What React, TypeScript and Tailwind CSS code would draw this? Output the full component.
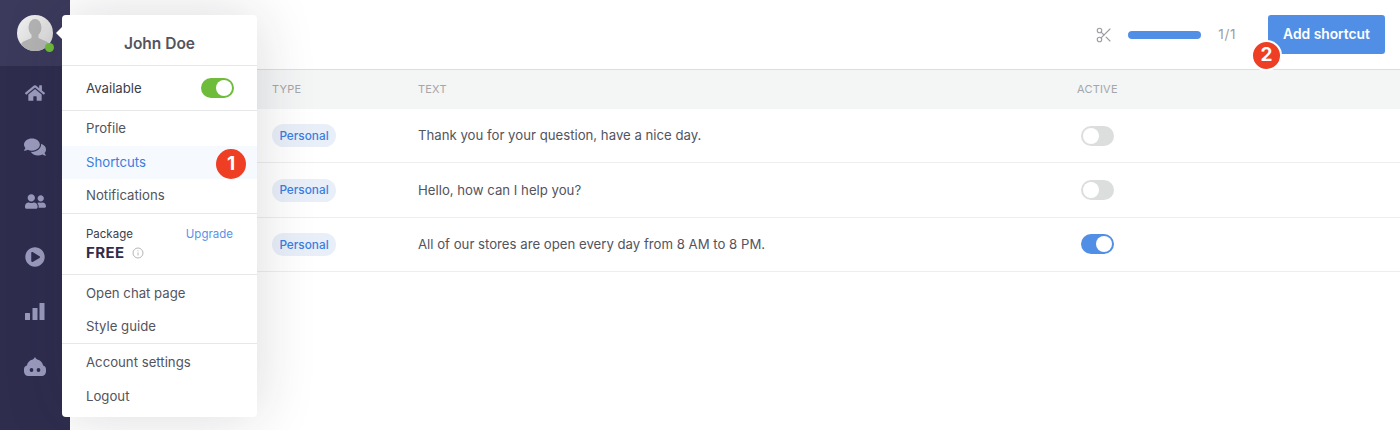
import { Scissors } from "lucide-react";
import type { FC } from "react";
import { FaComments, FaHome, FaPlayCircle, FaUserFriends } from "react-icons/fa";

const rows = [
    { text: "Thank you for your question, have a nice day.", active: false },
    { text: "Hello, how can I help you?", active: false },
    { text: "All of our stores are open every day from 8 AM to 8 PM.", active: true },
];

const ChartIcon: FC = () => (
    <svg width="20" height="17" viewBox="0 0 20 17" fill="#9a9bbd">
        <rect x="0" y="10" width="5" height="7" rx="0.5" />
        <rect x="7.5" y="5" width="5" height="12" rx="0.5" />
        <rect x="14.5" y="0" width="5" height="17" rx="0.5" />
    </svg>
);

const BotIcon: FC = () => (
    <svg width="22" height="20" viewBox="0 0 22 20">
        <path
            d="M11 0c.6 1.200 1.300 1.700 2.200 2.400 3.300.7 5.500 3.300 5.900 6.100 1.600.4 2.900 1.800 2.900 3.700v2.300c0 2.500-1.900 4.500-4.300 4.500H4.300C1.900 19 0 17 0 14.500v-2.300c0-1.900 1.300-3.300 2.900-3.700.4-2.800 2.600-5.400 5.900-6.100C9.700 1.700 10.400 1.200 11 0z"
            fill="#9a9bbd"
        />
        <circle cx="7.500" cy="13" r="1.900" fill="#2f2d4e" />
        <circle cx="14.500" cy="13" r="1.900" fill="#2f2d4e" />
    </svg>
);

const Avatar: FC = () => (
    <div className="relative h-9 w-9">
        <div className="h-9 w-9 overflow-hidden rounded-full bg-gradient-to-br from-[#f1f1f1] to-[#d4d4d4]">
            <svg viewBox="0 0 36 36" className="h-9 w-9" fill="#b3b3b3">
                <ellipse cx="18" cy="12.500" rx="6.500" ry="8.500" />
                <path d="M14.500 19h7v4l8 3.500c1.500.7 2.500 2 2.500 4V36H4v-5.500c0-2 1-3.300 2.500-4l8-3.500z" />
            </svg>
        </div>
        <span className="absolute right-[-1px] bottom-[-1px] h-[9px] w-[9px] rounded-full bg-[#6fbb3a]" />
    </div>
);

const Sidebar: FC = () => (
    <aside className="flex w-[70px] shrink-0 flex-col items-center bg-[#2f2d4e] text-[#9a9bbd]">
        <div className="flex h-[66px] w-full items-start justify-center bg-[#3c3a5c] pt-[15px] pr-[1px]">
            <Avatar />
        </div>
        <div className="flex h-[54px] w-full items-center justify-center"><FaHome size={20} /></div>
        <div className="flex h-[54px] w-full items-center justify-center"><FaComments size={22} /></div>
        <div className="flex h-[55px] w-full items-center justify-center"><FaUserFriends size={21} /></div>
        <div className="flex h-[55px] w-full items-center justify-center"><FaPlayCircle size={20} /></div>
        <div className="flex h-[55px] w-full items-center justify-center"><ChartIcon /></div>
        <div className="flex h-[55px] w-full items-center justify-center"><BotIcon /></div>
    </aside>
);

const Toggle: FC<{ active: boolean }> = ({ active }) => (
    <div
        className={`flex h-5 w-[33px] items-center rounded-full px-[2px] ${
            active ? "justify-end bg-[#518fe6]" : "justify-start bg-[#dcdddd]"
        }`}
    >
        <span className="h-4 w-4 rounded-full bg-white" />
    </div>
);

const NumberBadge: FC<{ value: number; className: string }> = ({ value, className }) => (
    <span
        className={`absolute z-20 flex items-center justify-center rounded-full bg-[#ee3e23] text-[19px] font-bold text-white ${className}`}
    >
        {value}
    </span>
);

const MenuItem: FC<{ label: string; selected?: boolean }> = ({ label, selected }) => (
    <div
        className={`flex h-[34px] items-center pl-[24px] text-[13.200px] ${
            selected ? "bg-[#f6f9fd] text-[#3a7ee0]" : "text-[#52545e]"
        }`}
    >
        {label}
    </div>
);

const ProfileMenu: FC = () => (
    <div className="absolute top-[15px] left-[62px] z-10 h-[402px] w-[195px] rounded bg-white shadow-[0_0_60px_rgba(30,30,50,0.16)]">
        <span className="absolute top-[12px] left-[-6px] h-0 w-0 border-y-[6px] border-r-[6px] border-y-transparent border-r-white" />
        <div className="flex h-[51px] items-center justify-center border-b border-[#e6e7e9] pt-[8px] text-[15.500px] font-semibold text-[#52545e]">
            John Doe
        </div>
        <div className="flex h-[45px] items-center justify-between border-b border-[#e6e7e9] pr-[23px] pl-[24px] text-[13.200px] text-[#3b3d4a]">
            <span className="pt-[2px]">Available</span>
            <div className="flex h-5 w-[33px] items-center justify-end rounded-full bg-[#6fbb3a] px-[2px]">
                <span className="h-4 w-4 rounded-full bg-white" />
            </div>
        </div>
        <div className="flex h-[103px] flex-col justify-center gap-[0.500px] border-b border-[#e6e7e9] pt-[1px]">
            <MenuItem label="Profile" />
            <MenuItem label="Shortcuts" selected />
            <MenuItem label="Notifications" />
        </div>
        <div className="flex h-[61px] flex-col justify-center border-b border-[#e6e7e9] px-[24px]">
            <div className="flex items-center justify-between text-[11.500px] leading-[16px]">
                <span className="text-[#3b3d4a]">Package</span>
                <span className="text-[#5a93e8]">Upgrade</span>
            </div>
            <div className="mt-[2px] mb-[1px] flex items-center gap-[8px]">
                <span className="text-[15px] leading-[18px] font-bold tracking-wide text-[#2f2d4e]">FREE</span>
                <svg width="12" height="12" viewBox="0 0 12 12" fill="none" stroke="#b5b6ba" strokeWidth="1">
                    <circle cx="6" cy="6" r="5" />
                    <path d="M6 5.500v3M6 3.400v1" />
                </svg>
            </div>
        </div>
        <div className="flex h-[69px] flex-col justify-center gap-[0.500px] border-b border-[#e6e7e9] pt-[3px]">
            <MenuItem label="Open chat page" />
            <MenuItem label="Style guide" />
        </div>
        <div className="flex flex-col pt-[2px]">
            <MenuItem label="Account settings" />
            <MenuItem label="Logout" />
        </div>
    </div>
);

const Header: FC = () => (
    <header className="flex h-[70px] shrink-0 items-start justify-end border-b border-[#dcdddd] pt-[15px] pr-[15px]">
        <div className="flex h-[39px] items-center text-[#9b9ca1]">
            <Scissors size={18} strokeWidth={1.500} className="mr-[15px]" />
            <div className="mr-[17px] h-2 w-[73px] rounded-full bg-[#518fe6]" />
            <span className="mr-[32px] text-[13.500px] tracking-[0.6px]">1/1</span>
        </div>
        <button className="h-[39px] w-[117px] rounded-[3px] bg-[#518fe6] text-[13.800px] font-semibold text-white">
            Add shortcut
        </button>
    </header>
);

const ShortcutsTable: FC = () => (
    <div className="flex-1">
        <div className="flex h-[39px] items-center bg-[#f4f5f5] text-[11px] tracking-[0.2px] text-[#a5a6a9]">
            <span className="w-[348px] pl-[202px]">TYPE</span>
            <span className="w-[659px]">TEXT</span>
            <span>ACTIVE</span>
        </div>
        {rows.map((row) => (
            <div key={row.text} className="flex h-[54.400px] items-center border-b border-[#eeeeef]">
                <div className="flex w-[348px] pl-[202px]">
                    <span className="flex h-[23px] w-[64px] items-center justify-center rounded-full bg-[#e9eff8] pt-[2px] text-[11.800px] font-medium text-[#3a7ee0]">
                        Personal
                    </span>
                </div>
                <span className="w-[663px] pt-[1px] text-[13.200px] text-[#52545e]">{row.text}</span>
                <Toggle active={row.active} />
            </div>
        ))}
    </div>
);

export default function App() {
    return (
        <div className="relative flex h-[430px] w-[1400px] overflow-hidden bg-white font-['Inter',sans-serif]">
            <Sidebar />
            <main className="flex flex-1 flex-col">
                <Header />
                <ShortcutsTable />
            </main>
            <ProfileMenu />
            <NumberBadge value={1} className="top-[149px] left-[216px] h-[30px] w-[30px]" />
            <NumberBadge value={2} className="top-[40px] left-[1251px] h-[31px] w-[31px] border-2 border-white" />
        </div>
    );
}
